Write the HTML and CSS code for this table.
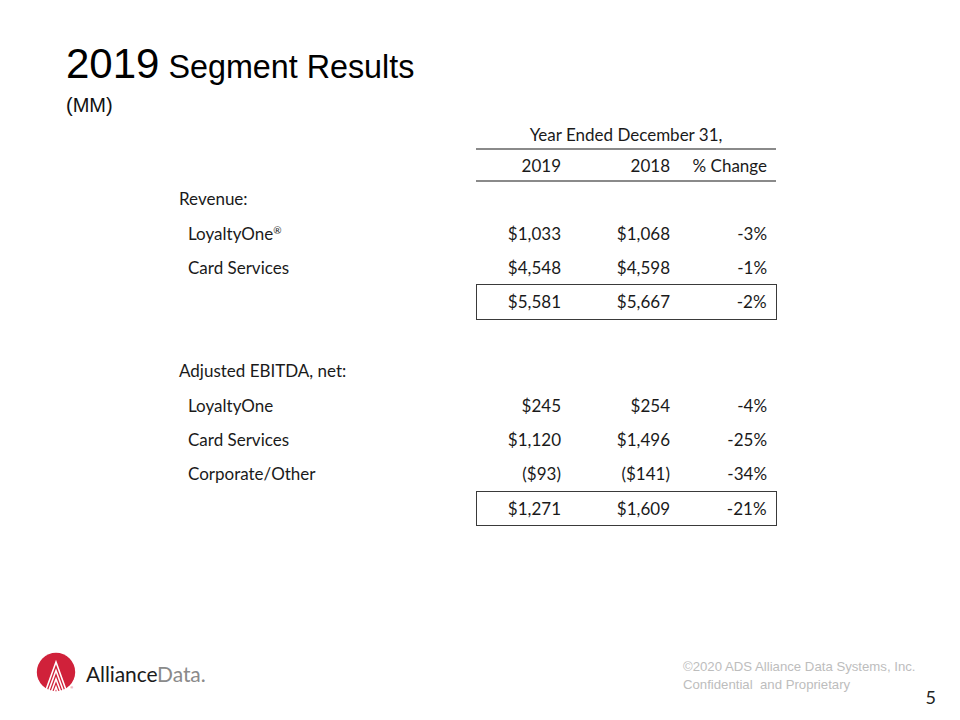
FILE: index.html
```html
<!DOCTYPE html>
<html lang="en">
<head>
<meta charset="utf-8">
<title>2019 Segment Results</title>
<link rel="stylesheet" href="styles.css">
</head>
<body>
<div class="slide">
  <header class="title-block">
    <h1 class="title"><span class="year">2019</span> Segment Results</h1>
    <div class="unit">(MM)</div>
  </header>

  <table class="results">
    <colgroup>
      <col class="c-label"><col class="c-num1"><col class="c-num2"><col class="c-num3">
    </colgroup>
    <thead>
      <tr class="h1row"><th></th><th colspan="3" class="period">Year Ended December 31,</th></tr>
      <tr class="h2row"><th></th><th class="num">2019</th><th class="num n2">2018</th><th class="num n3">% Change</th></tr>
    </thead>
    <tbody>
      <tr><td class="group">Revenue:</td><td></td><td></td><td></td></tr>
      <tr><td class="item">LoyaltyOne<sup>®</sup></td><td class="num">$1,033</td><td class="num n2">$1,068</td><td class="num n3">-3%</td></tr>
      <tr><td class="item">Card Services</td><td class="num">$4,548</td><td class="num n2">$4,598</td><td class="num n3">-1%</td></tr>
      <tr class="total"><td></td><td class="num first">$5,581</td><td class="num n2">$5,667</td><td class="num n3 last">-2%</td></tr>
      <tr><td></td><td></td><td></td><td></td></tr>
      <tr><td class="group">Adjusted EBITDA, net:</td><td></td><td></td><td></td></tr>
      <tr><td class="item">LoyaltyOne</td><td class="num">$245</td><td class="num n2">$254</td><td class="num n3">-4%</td></tr>
      <tr><td class="item">Card Services</td><td class="num">$1,120</td><td class="num n2">$1,496</td><td class="num n3">-25%</td></tr>
      <tr><td class="item">Corporate/Other</td><td class="num">($93)</td><td class="num n2">($141)</td><td class="num n3">-34%</td></tr>
      <tr class="total"><td></td><td class="num first">$1,271</td><td class="num n2">$1,609</td><td class="num n3 last">-21%</td></tr>
    </tbody>
  </table>

  <footer class="footer">
    <div class="brand">
      <svg class="brand-mark" width="42" height="44" viewBox="0 0 42 44" aria-hidden="true">
        <circle cx="21" cy="21" r="19.2" fill="#d0213a"/>
        <g fill="none" stroke="#fff" stroke-width="1.6" stroke-linejoin="miter">
          <polyline points="9.5,43 21,11 32.5,43"/>
          <polyline points="12.5,43 21,19.5 29.5,43"/>
          <polyline points="15.5,43 21,28 26.5,43"/>
          <polyline points="18.4,43 21,36 23.6,43"/>
        </g>
        <text x="35.5" y="38" font-size="3.5" fill="#d0213a" font-family="Arial, sans-serif">®</text>
      </svg>
      <span class="brand-name"><span class="brand-a">Alliance</span><span class="brand-d">Data.</span></span>
    </div>
    <div class="legal">
      <div>©2020 ADS Alliance Data Systems, Inc.</div>
      <div>Confidential&nbsp; and Proprietary</div>
    </div>
    <div class="page-num">5</div>
  </footer>
</div>
</body>
</html>
```

FILE: styles.css
```css
html, body {
  margin: 0;
  padding: 0;
  background: #ffffff;
}

.slide {
  width: 960px;
  height: 720px;
  display: flex;
  flex-direction: column;
  box-sizing: border-box;
  padding-top: 44px;
  color: #000;
  overflow: hidden;
}

.title-block {
  padding-left: 66px;
  font-family: "Liberation Sans", Arial, sans-serif;
}

.title {
  margin: 0;
  font-weight: normal;
  font-size: 32.3px;
  line-height: 40px;
  letter-spacing: 0;
}

.year {
  font-size: 42px;
}

.unit {
  margin-top: 8px;
  font-size: 20px;
  line-height: 20px;
  color: #111;
}

.results {
  margin-top: 5px;
  margin-left: 179px;
  border-collapse: collapse;
  table-layout: fixed;
  width: 597px;
  font-family: Lato, "Open Sans", sans-serif;
  font-size: 17px;
  color: #1a1a1a;
}

.c-label { width: 297px; }
.c-num1 { width: 90px; }
.c-num2 { width: 110px; }
.c-num3 { width: 100px; }

.results th {
  font-weight: normal;
  padding: 0;
}

.results td {
  padding: 0;
  white-space: nowrap;
}

.h1row th {
  height: 28px;
  vertical-align: middle;
}

.period {
  text-align: center;
  border-bottom: 2px solid #8a8a8a;
}

.h2row th {
  height: 30px;
  vertical-align: middle;
}

.h2row th.num {
  border-bottom: 2px solid #8a8a8a;
}

.num {
  text-align: right;
  padding-right: 5px !important;
}

.num.n2 { padding-right: 6px !important; }
.num.n3 { padding-right: 9px !important; }

.results tbody tr {
  height: 34.4px;
}

.results tbody tr:first-child {
  height: 35px;
}

.item {
  padding-left: 9px !important;
}

.item sup {
  font-size: 10px;
  line-height: 0;
  vertical-align: 6px;
}

.total td.num {
  border-top: 1px solid #3a3a3a;
  border-bottom: 1px solid #3a3a3a;
}

.total td.first { border-left: 1px solid #3a3a3a; }
.total td.last { border-right: 1px solid #3a3a3a; }

.footer {
  margin-top: auto;
  height: 68px;
  display: flex;
  align-items: flex-start;
  padding-left: 35px;
  padding-right: 24px;
}

.brand {
  display: flex;
  align-items: center;
  height: 42px;
}

.brand-mark {
  display: block;
}

.brand-name {
  margin-left: 9px;
  font-family: Lato, "Open Sans", sans-serif;
  font-size: 21px;
  letter-spacing: -0.1px;
  line-height: 1;
  padding-top: 1px;
}

.brand-a { color: #1b1b1b; }
.brand-d { color: #8a8a8a; }

.legal {
  margin-left: auto;
  margin-top: 6px;
  font-family: "Liberation Sans", Arial, sans-serif;
  font-size: 13.2px;
  line-height: 18px;
  color: #bdbdbd;
  white-space: nowrap;
}

.page-num {
  align-self: flex-end;
  margin-left: 10px;
  padding-bottom: 13px;
  font-family: Lato, "Open Sans", sans-serif;
  font-size: 18px;
  line-height: 20px;
  color: #222;
}
```
